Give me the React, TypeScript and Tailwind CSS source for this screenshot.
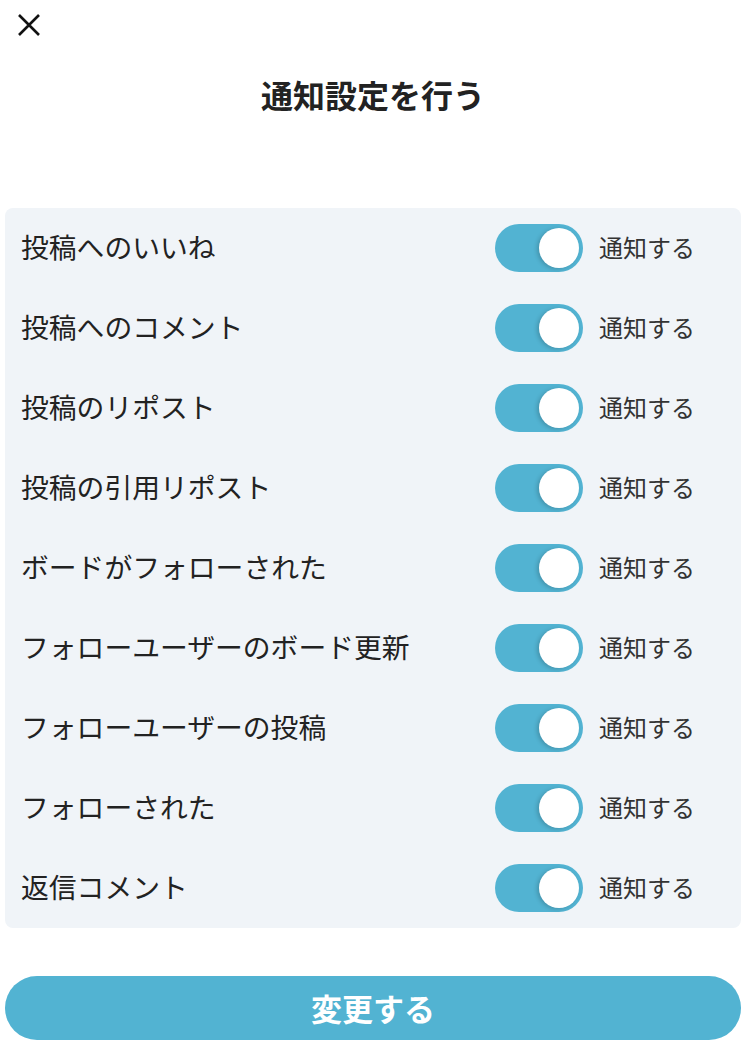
import React, { useState } from 'react';

const items = [
  '投稿へのいいね',
  '投稿へのコメント',
  '投稿のリポスト',
  '投稿の引用リポスト',
  'ボードがフォローされた',
  'フォローユーザーのボード更新',
  'フォローユーザーの投稿',
  'フォローされた',
  '返信コメント',
];

const font = { fontFamily: '"Noto Sans CJK JP", "Noto Sans", sans-serif' };

function Toggle({ on, onClick }: { on: boolean; onClick: () => void }) {
  return (
    <button
      onClick={onClick}
      className={`relative w-[88px] h-[48px] rounded-full flex-shrink-0 transition-colors ${on ? 'bg-[#52b3d2]' : 'bg-[#c9d2db]'}`}
    >
      <span
        className={`absolute top-[4px] w-[40px] h-[40px] rounded-full bg-white shadow-[-2px_1px_4px_rgba(0,0,0,0.18)] transition-all ${on ? 'left-[44px]' : 'left-[4px]'}`}
      />
    </button>
  );
}

export default function App() {
  const [state, setState] = useState(items.map(() => true));

  return (
    <div className="w-[750px] h-[1048px] bg-white relative text-[#222]" style={font}>
      {/* ── Close ── */}
      <button className="absolute left-[16px] top-[12px] w-[26px] h-[26px] flex items-center justify-center">
        <svg width="24" height="24" viewBox="0 0 24 24" fill="none" stroke="#111" strokeWidth="2.6" strokeLinecap="butt">
          <path d="M2 2L22 22M22 2L2 22" />
        </svg>
      </button>

      {/* ── Title ── */}
      <h1 className="pt-[72px] w-[746px] text-center text-[32px] font-bold leading-[44px] text-[#222]">通知設定を行う</h1>

      {/* ── Settings list ── */}
      <div className="mt-[92px] ml-[5px] w-[736px] bg-[#f0f4f8] rounded-[8px]">
        {items.map((label, i) => (
          <div key={label} className="h-[80px] flex items-center pl-[16px]">
            <span className="flex-1 text-[27.8px] text-[#222] leading-none -mt-[2px]">{label}</span>
            <Toggle on={state[i]} onClick={() => setState(s => s.map((v, j) => (j === i ? !v : v)))} />
            <span className="w-[158px] pl-[16px] text-[24px] text-[#333] leading-none -mt-[3px]">通知する</span>
          </div>
        ))}
      </div>

      {/* ── Submit ── */}
      <button className="mt-[48px] ml-[5px] w-[736px] h-[64px] rounded-full bg-[#52b3d2] text-white text-[31px] font-bold flex items-center justify-center">
        変更する
      </button>
    </div>
  );
}
